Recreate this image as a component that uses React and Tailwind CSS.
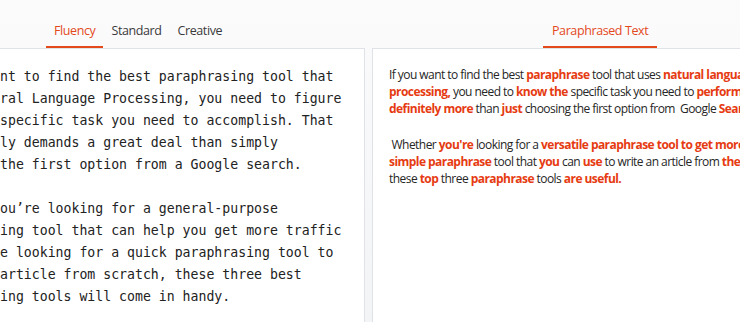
import React from "react";

const ORANGE = "text-[#e4491c]";

const leftParas = [
  [
    "nt to find the best paraphrasing tool that",
    "ral Language Processing, you need to figure",
    "specific task you need to accomplish. That",
    "ly demands a great deal than simply",
    "the first option from a Google search.",
  ],
  [
    "ou\u2019re looking for a general-purpose",
    "ing tool that can help you get more traffic",
    "e looking for a quick paraphrasing tool to",
    "article from scratch, these three best",
    "ing tools will come in handy.",
  ],
];

// each line: array of [text, bold]
const rightParas = [
  [
    [["If you want to find the best ", 0], ["paraphrase", 1], [" tool that uses ", 0], ["natural language", 1]],
    [["processing,", 1], [" you need to ", 0], ["know the", 1], [" specific task you need to ", 0], ["perform.", 1], [" That", 0]],
    [["definitely more", 1], [" than ", 0], ["just", 1], [" choosing the first option from\u00a0 Google ", 0], ["Search.", 1]],
  ],
  [
    [["\u00a0Whether ", 0], ["you're", 1], [" looking for a ", 0], ["versatile paraphrase tool to get more", 1], [" traffic", 0]],
    [["simple paraphrase", 1], [" tool that ", 0], ["you", 1], [" can ", 0], ["use", 1], [" to write an article from ", 0], ["the beginning,", 1]],
    [["these ", 0], ["top", 1], [" three ", 0], ["paraphrase", 1], [" tools ", 0], ["are useful.", 1]],
  ],
];

function Tab({ label, active, pad }) {
  return (
    <div className={`relative h-full flex items-center pt-[15px] ${pad}`}>
      <span className={active ? ORANGE : "text-[#3a3a3a]"}>{label}</span>
      {active && <div className="absolute left-0 right-0 bottom-0 h-[2px] bg-[#e4491c]" />}
    </div>
  );
}

export default function App() {
  return (
    <div
      className="w-[740px] h-[322px] overflow-hidden flex flex-col bg-gradient-to-b from-[#fbfbfc] to-[#f3f4f6]"
      style={{ fontFamily: "'Open Sans', 'Noto Sans', sans-serif" }}
    >
      <div className="h-[48px] flex shrink-0 text-[12.5px] tracking-[-0.4px]">
        <div className="w-[364px] flex items-stretch pl-[46px]">
          <Tab label="Fluency" active pad="px-[8px]" />
          <Tab label="Standard" pad="px-[8px]" />
          <Tab label="Creative" pad="px-[8px]" />
        </div>
        <div className="flex-1 flex items-stretch pl-[179px]">
          <Tab label="Paraphrased Text" active pad="px-[9px]" />
        </div>
      </div>

      <div className="flex-1 flex gap-[7px] min-h-0">
        <div className="w-[365px] bg-white border-t border-r border-[#dfe3e8] overflow-hidden pt-[17px]">
          <div
            className="text-[13.2px] leading-[22px] text-[#222] whitespace-pre"
            style={{ fontFamily: "'DejaVu Sans Mono', 'Liberation Mono', monospace" }}
          >
            {leftParas.map((p, i) => (
              <div key={i} className={i > 0 ? "mt-[22px]" : ""}>
                {p.map((l, j) => (
                  <div key={j}>{l}</div>
                ))}
              </div>
            ))}
          </div>
        </div>

        <div className="flex-1 bg-white border-t border-l border-[#dfe3e8] overflow-hidden pt-[17px] pl-[16px]">
          <div className="text-[12px] leading-[17px] tracking-[-0.55px] text-[#262626] whitespace-nowrap">
            {rightParas.map((p, i) => (
              <div key={i} className={i > 0 ? "mt-[19px]" : ""}>
                {p.map((line, j) => (
                  <div key={j}>
                    {line.map(([t, b], k) =>
                      b ? (
                        <span key={k} className="font-bold text-[#e63b12]">
                          {t}
                        </span>
                      ) : (
                        <span key={k}>{t}</span>
                      )
                    )}
                  </div>
                ))}
              </div>
            ))}
          </div>
        </div>
      </div>
    </div>
  );
}
